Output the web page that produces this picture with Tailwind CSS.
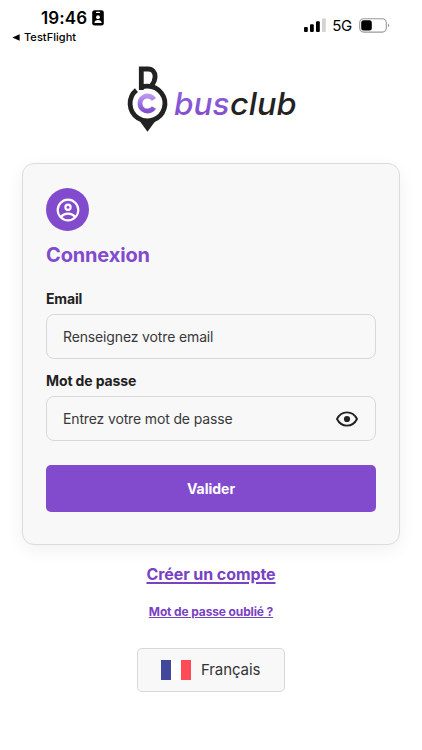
<!DOCTYPE html>
<html lang="fr">
<head>
<meta charset="utf-8">
<meta name="viewport" content="width=device-width, initial-scale=1">
<title>Busclub – Connexion</title>
<script src="https://cdn.jsdelivr.net/npm/@tailwindcss/browser@4"></script>
</head>
<body class="bg-white font-['Inter',sans-serif] text-[#222] overflow-hidden">
<div class="w-[422px] h-[750px] flex flex-col items-center overflow-hidden">
  <header class="w-full h-[52px] shrink-0 flex justify-between pl-[12px] pr-[31px] text-black">
    <div class="pt-[8px]">
      <div class="flex items-center gap-[5px] pl-[29px] h-[20px]">
        <span class="text-[17px] leading-[20px] font-semibold tracking-[0.1px]">19:46</span>
        <svg class="w-[12px] h-[16px]" viewBox="0 0 12 16"><rect x=".2" y=".2" width="11.6" height="15.4" rx="2.4"/><rect x="4" y="1.7" width="4" height="1.3" rx=".6" fill="#fff"/><circle cx="6" cy="7.2" r="1.9" fill="#fff"/><path d="M2.3 13c.2-2 1.7-3.1 3.7-3.1S9.500 11 9.700 13z" fill="#fff"/></svg>
      </div>
      <div class="flex items-center gap-[4px] h-[18px]">
        <svg class="w-[8px] h-[7px]" viewBox="0 0 8 7"><path d="M.4 3.500 7.600.3v6.400z"/></svg>
        <span class="text-[11px] leading-[18px] font-medium tracking-[0.05px]">TestFlight</span>
      </div>
    </div>
    <div class="flex items-center h-[50px]">
      <svg class="w-[22px] h-[14px]" viewBox="0 0 22 14"><rect x="0" y="9" width="3.800" height="5" rx="1"/><rect x="6" y="6.300" width="3.800" height="7.700" rx="1"/><rect x="12" y="3.300" width="3.800" height="10.700" rx="1"/><rect x="18" y=".2" width="3.800" height="13.800" rx="1" fill="#d4d4d4"/></svg>
      <span class="ml-[6px] text-[15px] leading-[20px] tracking-[-0.3px] pt-[2px]">5G</span>
      <svg class="ml-[7px] w-[32px] h-[15px]" viewBox="0 0 32 15"><rect x=".7" y=".7" width="26.600" height="13.400" rx="4" fill="none" stroke="#999" stroke-width="1.100"/><rect x="2.200" y="2.300" width="10.600" height="10.200" rx="2.500"/><path d="M29 5.500c1.600.5 1.600 3.300 0 3.800z" fill="#999"/></svg>
    </div>
  </header>

  <svg class="w-[174px] h-[68px] mt-[13px] shrink-0" viewBox="0 0 174 68" role="img" aria-label="busclub">
    <defs><linearGradient id="c" x1="0" y1="0" x2="0" y2="1"><stop offset="0" stop-color="#b995f0"/><stop offset="1" stop-color="#8150ce"/></linearGradient><linearGradient id="w" x1="0" y1="0" x2="0" y2="1"><stop offset="0" stop-color="#9365dc"/><stop offset="1" stop-color="#7d49cb"/></linearGradient></defs>
    <g fill="none" stroke="#222" stroke-width="4.800">
      <path d="M17.300 25V4h6.700c4.500 0 7.100 3.100 7.100 7.600 0 4.400-2 7.300-4.200 9.700"/>
      <path d="M17.300 22.200C19.300 21.400 21.300 21.100 23.500 21.100A17.400 17.400 0 1 1 12.400 25.100"/>
    </g>
    <path d="M16 56.500h15L23.500 66.800z" fill="#222"/>
    <path d="M29.900 34.600a7.500 7.500 0 1 0 0 7.800" fill="none" stroke="url(#c)" stroke-width="4.800"/>
    <text x="50" y="50" font-family="Inter" font-style="italic" font-weight="500" font-size="31" textLength="55.500" lengthAdjust="spacingAndGlyphs" fill="url(#w)">bus</text>
    <text x="106" y="50" font-family="Inter" font-style="italic" font-weight="500" font-size="31" textLength="66.500" lengthAdjust="spacingAndGlyphs" fill="#222">club</text>
  </svg>

  <main class="w-[378px] h-[382px] mt-[30px] shrink-0 rounded-[12px] border border-[#dcdcdc] bg-[#f8f8f8] px-[23px] pt-[24px] flex flex-col shadow-[0_5px_18px_rgba(0,0,0,0.06)]">
    <div class="size-[43px] shrink-0 rounded-full bg-[#824bce] flex items-center justify-center">
      <svg class="size-[24px]" viewBox="0 0 24 24" fill="none" stroke="#fff" stroke-width="2.200"><circle cx="12" cy="12" r="10.300"/><circle cx="12" cy="9.200" r="2.600"/><path d="M5 18.800c1.700-2.200 4.200-3.200 7-3.200s5.300 1 7 3.200"/></svg>
    </div>
    <h1 class="mt-[11px] text-[20px] leading-[26px] font-bold tracking-[-0.15px] text-[#824bce]">Connexion</h1>
    <label class="mt-[21px] text-[14px] leading-[20px] font-bold tracking-[-0.15px]">Email</label>
    <div class="mt-[5px] h-[45px] shrink-0 rounded-[8px] border border-[#d8d8d8] px-[16px] flex items-center"><span class="text-[14px] tracking-[-0.14px] text-[#383838]">Renseignez votre email</span></div>
    <label class="mt-[12px] text-[14px] leading-[20px] font-bold tracking-[-0.12px]">Mot de passe</label>
    <div class="mt-[5px] h-[45px] shrink-0 rounded-[8px] border border-[#d8d8d8] pl-[16px] pr-[17px] flex items-center justify-between"><span class="text-[14px] tracking-[-0.14px] text-[#383838]">Entrez votre mot de passe</span>
      <svg class="w-[22px] h-[16px]" viewBox="0 0 22 16"><path d="M1 8C3.200 3.600 6.600 1.400 11 1.400S18.800 3.600 21 8c-2.200 4.400-5.600 6.600-10 6.600S3.200 12.400 1 8z" fill="none" stroke="#222" stroke-width="1.900" stroke-linejoin="round"/><circle cx="11" cy="8" r="3.100" fill="#222"/></svg>
    </div>
    <button class="mt-[23.500px] h-[47.500px] shrink-0 rounded-[5px] bg-[#824bce] text-white text-[14px] font-bold">Valider</button>
  </main>

  <a class="mt-[18px] text-[16px] leading-[22px] font-bold tracking-[-0.08px] text-[#7842c4] underline decoration-[1.500px] underline-offset-[2px]">Créer un compte</a>
  <a class="mt-[18px] text-[12px] leading-[18px] font-bold tracking-[-0.13px] text-[#7842c4] underline decoration-1 underline-offset-[1px]">Mot de passe oublié ?</a>
  <div class="mt-[27px] w-[148px] h-[44px] shrink-0 rounded-[5px] border border-[#d8d8d8] bg-[#f8f8f8] flex items-center pl-[23px] gap-[10px]">
    <span class="flex w-[30px] h-[20px]"><i class="flex-1 bg-[#41479b]"></i><i class="flex-1 bg-white"></i><i class="flex-1 bg-[#ff4b55]"></i></span>
    <span class="text-[15px] tracking-[-0.1px] text-[#333]">Français</span>
  </div>
</div>
</body>
</html>
